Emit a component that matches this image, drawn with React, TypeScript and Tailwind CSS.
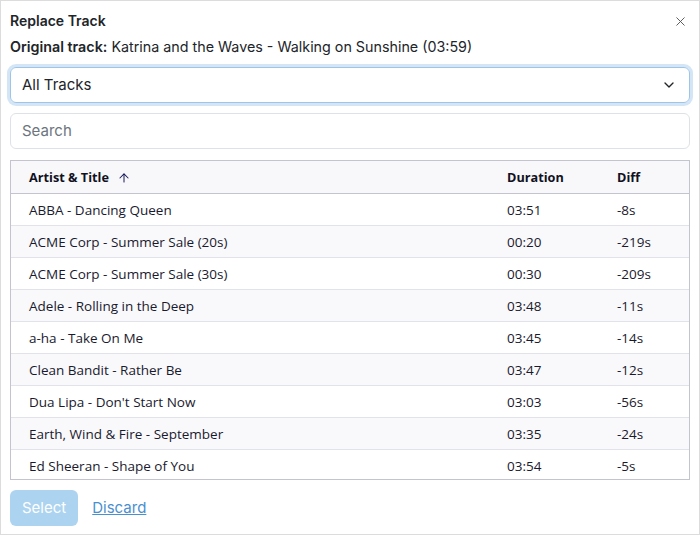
import { ChevronDown, X, ArrowUp } from "lucide-react";

const tracks = [
  { title: "ABBA - Dancing Queen", duration: "03:51", diff: "-8s" },
  { title: "ACME Corp - Summer Sale (20s)", duration: "00:20", diff: "-219s" },
  { title: "ACME Corp - Summer Sale (30s)", duration: "00:30", diff: "-209s" },
  { title: "Adele - Rolling in the Deep", duration: "03:48", diff: "-11s" },
  { title: "a-ha - Take On Me", duration: "03:45", diff: "-14s" },
  { title: "Clean Bandit - Rather Be", duration: "03:47", diff: "-12s" },
  { title: "Dua Lipa - Don't Start Now", duration: "03:03", diff: "-56s" },
  { title: "Earth, Wind & Fire - September", duration: "03:35", diff: "-24s" },
  { title: "Ed Sheeran - Shape of You", duration: "03:54", diff: "-5s" },
];

export default function App() {
  return (
    <div className="h-[535px] w-[700px] bg-white font-['Inter',sans-serif] text-[#212529]">
      <div className="flex h-full flex-col border border-[#dcdcdc] px-[9px] pt-[11px]">
        <div className="flex items-center justify-between">
          <h1 className="text-[14px] font-semibold leading-[18px]">Replace Track</h1>
          <button className="mr-[2px] text-[#555]">
            <X size={15} strokeWidth={1.5} />
          </button>
        </div>
        <p className="mt-[8px] text-[14.3px] leading-[18px]">
          <span className="font-semibold">Original track:</span> Katrina and the Waves - Walking on Sunshine (03:59)
        </p>

        <div className="mt-[11px] flex h-[36px] items-center justify-between rounded-[6px] border border-[#9ec5e8] px-[11px] shadow-[0_0_0_3px_#d4e6f6]">
          <span className="text-[15px]">All Tracks</span>
          <ChevronDown size={16} strokeWidth={2} className="mr-[1px]" />
        </div>

        <div className="mt-[10px] flex h-[36px] items-center rounded-[6px] border border-[#dee2e6] px-[11px]">
          <span className="text-[15px] text-[#6c757d]">Search</span>
        </div>

        <div className="mt-[11px] h-[320px] overflow-hidden border border-[#c4c4d0] font-['Open_Sans',sans-serif] text-[13.5px] text-[#1a1a2e]">
          <div className="flex h-[33px] items-center border-b border-[#c4c4d0] bg-[#f8f8fa] pt-[2px] text-[12.7px] font-bold text-[#111122]">
            <div className="flex flex-1 items-center gap-[8px] pl-[18px]">
              Artist &amp; Title
              <ArrowUp size={14} strokeWidth={1.75} className="text-[#1a1a5e]" />
            </div>
            <div className="w-[110px]">Duration</div>
            <div className="w-[72px]">Diff</div>
          </div>
          {tracks.map((t, i) => (
            <div
              key={i}
              className={`flex h-[32px] items-center border-b border-[#e2e2ea] pt-[2px] ${i % 2 === 1 ? "bg-[#f9f9fb]" : "bg-white"}`}
            >
              <div className="flex-1 pl-[18px]">{t.title}</div>
              <div className="w-[110px]">{t.duration}</div>
              <div className="w-[72px]">{t.diff}</div>
            </div>
          ))}
        </div>

        <div className="mt-[10px] flex items-center gap-[14px]">
          <button className="h-[36px] rounded-[6px] bg-[#acd3ef] px-[12px] text-[15px] text-white">Select</button>
          <a className="text-[15px] text-[#4a8fd0] underline">Discard</a>
        </div>
      </div>
    </div>
  );
}
